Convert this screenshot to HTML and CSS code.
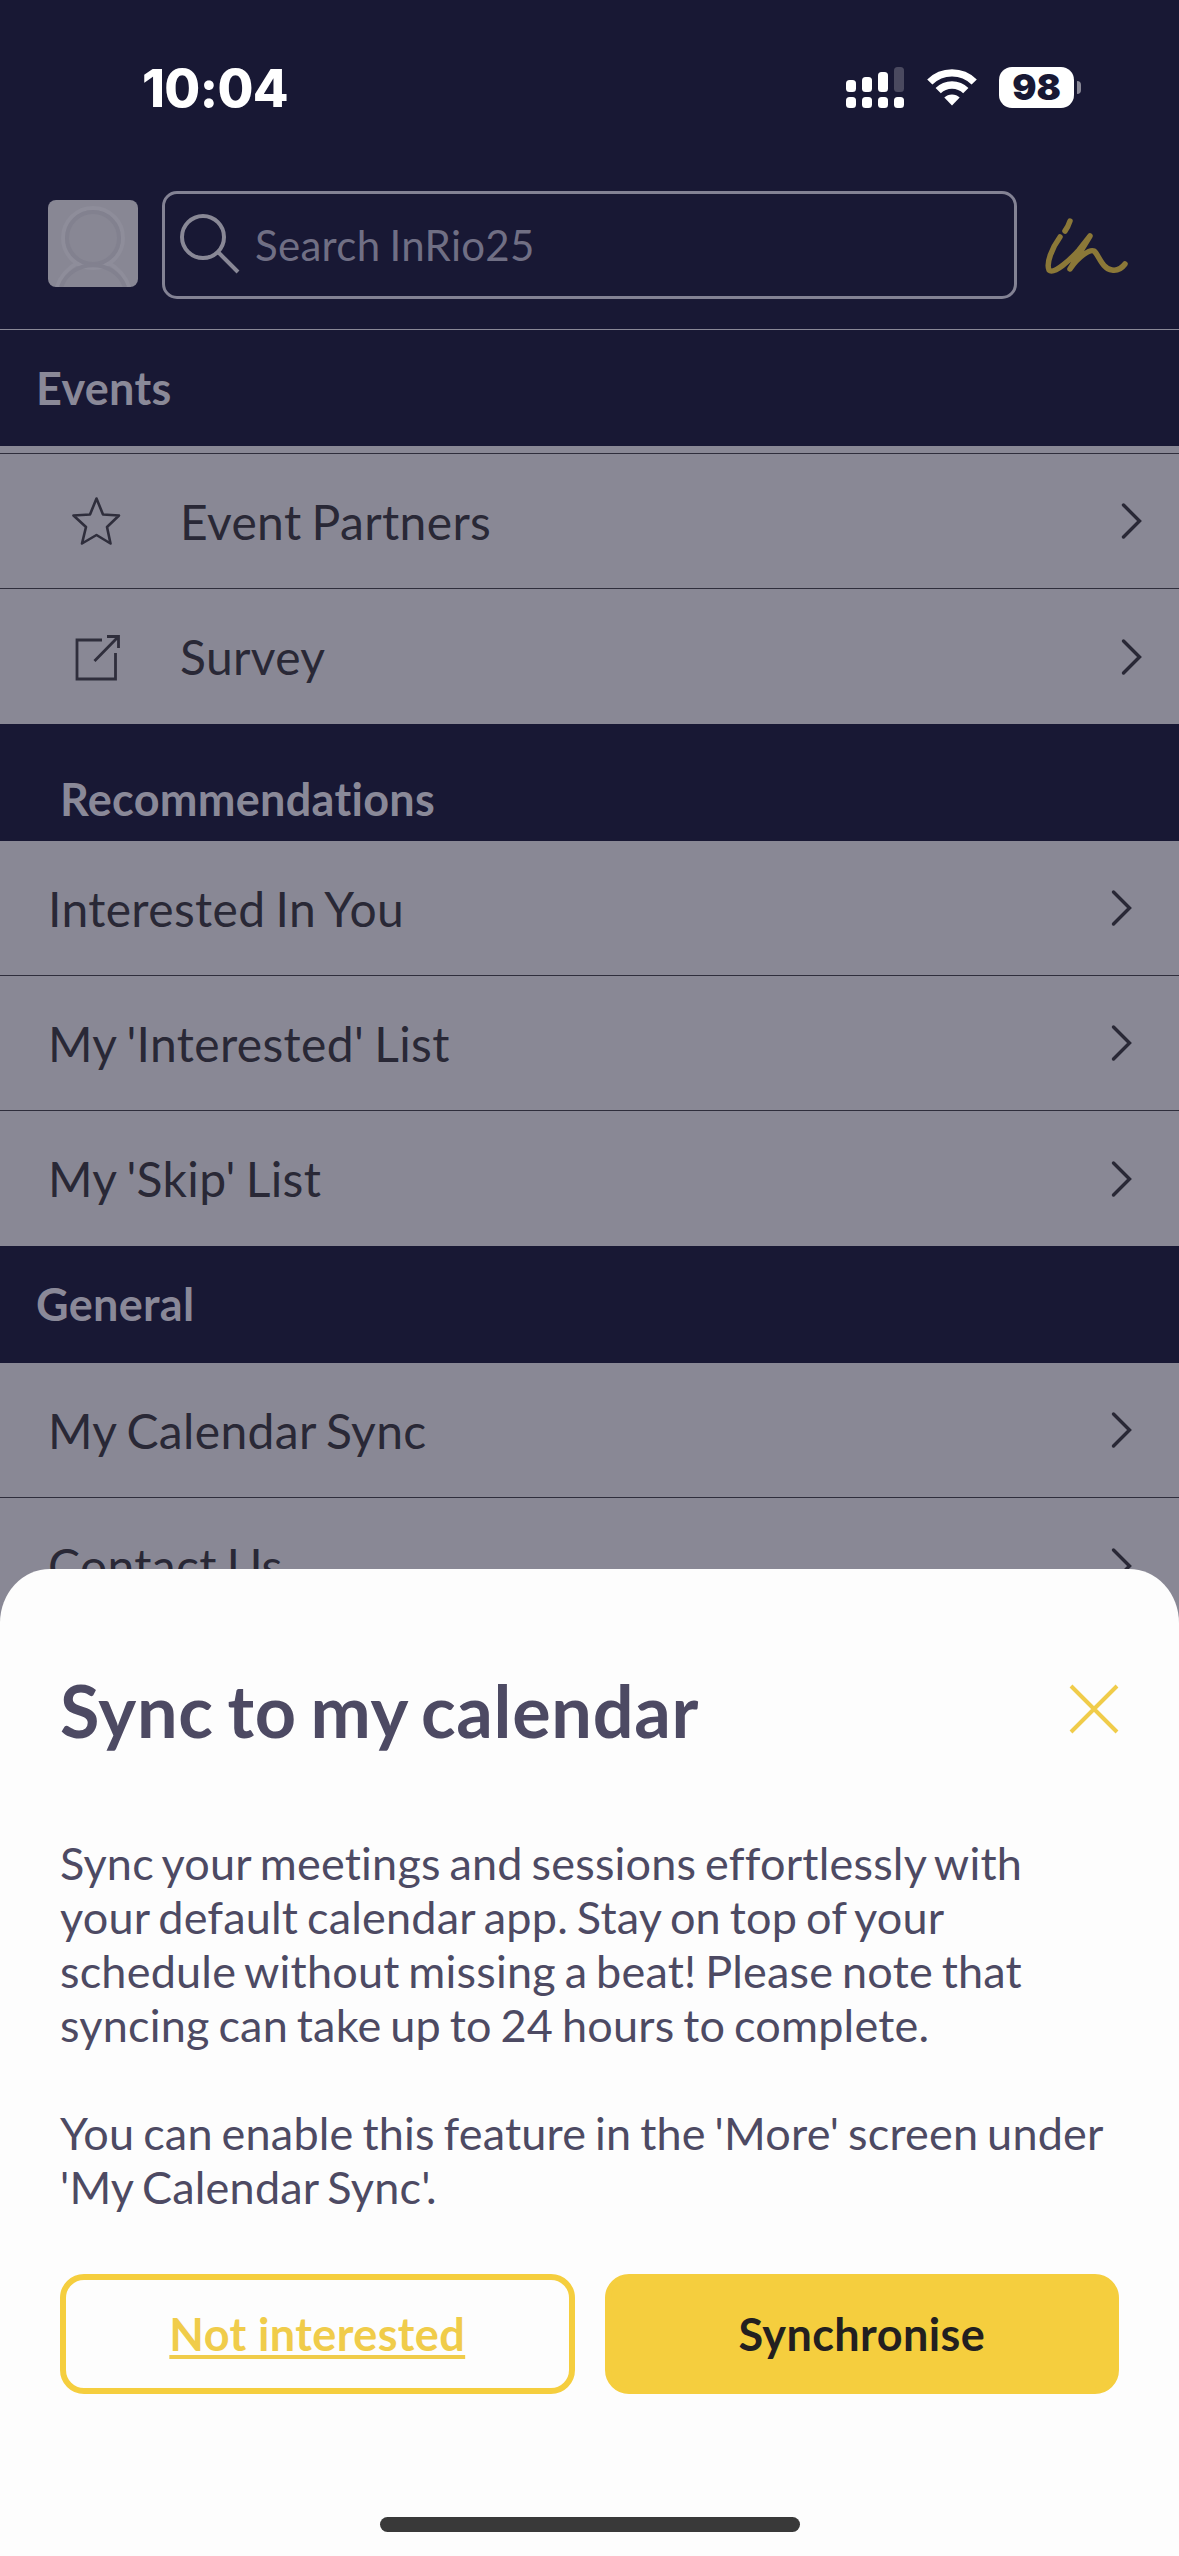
FILE: index.html
```html
<!DOCTYPE html>
<html lang="en">

<head>
  <meta charset="UTF-8" />
  <meta name="viewport" content="width=device-width, initial-scale=1.0" />
  <title>InRio25</title>

  <link rel="stylesheet" href="styles.css">
</head>

<body>
  <div id="app">
    <div class="status-bar">
      <span class="clock">10:04</span>
      <div class="status-icons">
        <svg class="signal" width="58" height="42" viewBox="0 0 58 42" fill="#fff">
          <rect x="0" y="13" width="10" height="12" rx="3.5" />
          <rect x="16" y="10" width="10" height="15" rx="3.5" />
          <rect x="32" y="5" width="10" height="20" rx="3.5" />
          <rect x="48" y="0" width="10" height="25" rx="3.5" fill="#4a495f" />
          <rect x="0" y="30" width="10" height="11" rx="3.5" />
          <rect x="16" y="30" width="10" height="11" rx="3.5" />
          <rect x="32" y="30" width="10" height="11" rx="3.5" />
          <rect x="48" y="30" width="10" height="11" rx="3.5" />
        </svg>
        <svg class="wifi" width="50" height="38" viewBox="0 0 50 38">
          <g fill="none" stroke="#fff" stroke-width="7.4">
            <path d="M2.8 14A31.5 31.5 0 0 1 47.2 14" />
            <path d="M11.2 22.7A19.5 19.5 0 0 1 38.8 22.7" />
          </g>
          <path fill="#fff" d="M17.3 29.6a11 11 0 0 1 15.4 0L25 37.5z" />
        </svg>
        <span class="battery">98</span>
        <span class="battery-cap"></span>
      </div>
    </div>

    <div class="top-bar">
      <svg class="avatar" width="90" height="87" viewBox="0 0 90 87">
        <rect width="90" height="87" rx="8" fill="#888794" />
        <g fill="none" stroke="#82818f" stroke-width="4">
          <circle cx="45" cy="38" r="30" stroke="#8e8d9a" />
          <circle cx="45" cy="38" r="26" />
          <path d="M9 87C12 77 19 69 29 63M81 87C78 77 71 69 61 63" stroke="#8e8d9a" />
          <path d="M13 87C24 58 66 58 77 87" />
        </g>
      </svg>
      <div class="search">
        <svg width="62" height="62" viewBox="0 0 62 62" fill="none" stroke="#898896" stroke-width="4">
          <circle cx="23" cy="24" r="21" />
          <path d="M38 39L58 59" />
        </svg>
        <span>Search InRio25</span>
      </div>
      <svg class="logo" width="84" height="58" viewBox="0 0 84 58" fill="none" stroke="#8b7838" stroke-width="5.5" stroke-linecap="round" stroke-linejoin="round">
        <path d="M25 4Q23 10 20 14" />
        <path d="M15 20C7 31 1 46 4 53C9 58 26 42 34 33L45 19L25 52C34 39 45 32 49 34C54 38 57 52 67 53C73 54 77 51 80 47" />
      </svg>
    </div>

    <h2>Events</h2>
    <ul class="events">
      <li>
        <svg class="icon" width="52" height="52" viewBox="0 0 52 52" fill="none" stroke="#2f2e3c" stroke-width="2.6" stroke-linejoin="round">
          <path d="M26.500 3.500L33 19.500L49 20.500L37 32L40.500 48.500L26.500 40L12 48.500L16 32L3.500 20.500L20 19.500Z" />
        </svg>
        <span>Event Partners</span>
        <svg class="arrow" width="22" height="38" viewBox="0 0 22 38"><path d="M2.500 3L18.500 19L2.500 35" /></svg>
      </li>
      <li>
        <svg class="icon" width="52" height="52" viewBox="0 0 52 52" fill="none" stroke="#2f2e3c" stroke-width="2.8">
          <path d="M32 9H7V48H45.500V22M24.500 30L48 6M37 5.500H48.500V17" />
        </svg>
        <span>Survey</span>
        <svg class="arrow" width="22" height="38" viewBox="0 0 22 38"><path d="M2.500 3L18.500 19L2.500 35" /></svg>
      </li>
    </ul>

    <h2 class="recommendations">Recommendations</h2>
    <ul>
      <li>
        <span>Interested In You</span>
        <svg class="arrow" width="22" height="38" viewBox="0 0 22 38"><path d="M2.500 3L18.500 19L2.500 35" /></svg>
      </li>
      <li>
        <span>My 'Interested' List</span>
        <svg class="arrow" width="22" height="38" viewBox="0 0 22 38"><path d="M2.500 3L18.500 19L2.500 35" /></svg>
      </li>
      <li>
        <span>My 'Skip' List</span>
        <svg class="arrow" width="22" height="38" viewBox="0 0 22 38"><path d="M2.500 3L18.500 19L2.500 35" /></svg>
      </li>
    </ul>

    <h2 class="general">General</h2>
    <ul>
      <li>
        <span>My Calendar Sync</span>
        <svg class="arrow" width="22" height="38" viewBox="0 0 22 38"><path d="M2.500 3L18.500 19L2.500 35" /></svg>
      </li>
      <li>
        <span>Contact Us</span>
        <svg class="arrow" width="22" height="38" viewBox="0 0 22 38"><path d="M2.500 3L18.500 19L2.500 35" /></svg>
      </li>
    </ul>

    <!-- bottom sheet -->
    <div class="sheet">
      <div class="sheet-title">
        <h1>Sync to my calendar</h1>
        <svg class="close" width="50" height="52" viewBox="0 0 50 52" fill="none" stroke="#f0cc4a" stroke-width="4">
          <path d="M2 3L48 49M48 3L2 49" />
        </svg>
      </div>
      <p>Sync your meetings and sessions effortlessly with<br>your default calendar app. Stay on top of your<br>schedule without missing a beat! Please note that<br>syncing can take up to 24 hours to complete.</p>
      <p>You can enable this feature in the 'More' screen under<br>'My Calendar Sync'.</p>
      <div class="buttons">
        <button class="outline">Not interested</button>
        <button>Synchronise</button>
      </div>
      <div class="home-bar"></div>
    </div>
  </div>
</body>

</html>
```

FILE: styles.css
```css
* {
  box-sizing: border-box;
}

body {
  margin: 0;
  background: #898895;
  font-family: Lato, sans-serif;
  font-variant-ligatures: none;
}

#app {
  position: relative;
  width: 1179px;
  height: 2556px;
  overflow: hidden;
}

.status-bar {
  display: flex;
  justify-content: space-between;
  height: 191px;
  padding: 66px 98px 0 142px;
  background: #181834;
}

.clock {
  color: #fff;
  font-family: Inter, sans-serif;
  font-size: 52px;
  font-weight: 800;
  letter-spacing: -0.6px;
  line-height: 45px;
}

.status-icons {
  display: flex;
  align-items: flex-start;
}

.signal {
  margin: 1px 23px 0 0;
}

.wifi {
  margin: 2px 22px 0 0;
}

.battery {
  width: 75px;
  height: 41px;
  margin-top: 1px;
  border-radius: 13px;
  background: #fff;
  color: #181834;
  font-family: Inter, sans-serif;
  font-size: 36px;
  font-weight: 900;
  line-height: 41px;
  text-align: center;
}

.battery-cap {
  width: 4px;
  height: 13px;
  margin: 15px 0 0 3px;
  border-radius: 0 5px 5px 0;
  background: #898896;
}

.top-bar {
  display: flex;
  align-items: flex-start;
  height: 139px;
  padding-left: 48px;
  border-bottom: 1px solid #898896;
  background: #181834;
}

.avatar {
  margin: 9px 24px 0 0;
}

.search {
  display: flex;
  align-items: center;
  gap: 13px;
  width: 855px;
  height: 108px;
  padding: 0 0 0 15px;
  border: 3px solid #838294;
  border-radius: 15px;
  color: #706f84;
  font-size: 42px;
  letter-spacing: 0.3px;
  word-spacing: -2px;
}

.search svg {
  margin-bottom: 2px;
}

.logo {
  margin: 26px 0 0 28px;
}

h2 {
  height: 116px;
  margin: 0;
  padding-left: 36px;
  background: #181834;
  color: #8a8998;
  font-size: 45px;
  font-weight: 700;
  letter-spacing: 0.3px;
  line-height: 116px;
}

.recommendations {
  height: 117px;
  padding: 17px 0 0 60px;
}

.general {
  height: 117px;
}

ul {
  margin: 0;
  padding: 0;
  list-style: none;
}

li {
  display: flex;
  align-items: center;
  height: 135px;
  padding: 0 46px 0 48px;
  border-bottom: 1px solid #2f2e3c;
  color: #292836;
  font-size: 48px;
  letter-spacing: 0.35px;
  word-spacing: -2.5px;
}

li:last-child {
  border-bottom: 0;
}

.events {
  border-top: 7px solid #898895;
}

.events li {
  padding: 0 36px 0 70px;
}

.events li:first-child {
  height: 136px;
  border-top: 1px solid #2f2e3c;
}

.icon {
  margin-right: 58px;
}

.arrow {
  margin-left: auto;
  fill: none;
  stroke: #292836;
  stroke-width: 3.4;
  stroke-linecap: round;
}

.sheet {
  position: absolute;
  left: 0;
  right: 0;
  bottom: 0;
  height: 987px;
  padding: 98px 60px 0;
  border-radius: 50px 50px 0 0 / 54px 54px 0 0;
  background: #fdfdfd;
  color: #4d4a63;
}

.sheet-title {
  display: flex;
  justify-content: space-between;
  align-items: center;
  height: 86px;
  margin-bottom: 83px;
}

h1 {
  margin: 0;
  font-size: 72px;
  font-weight: 700;
  letter-spacing: 0.7px;
  word-spacing: -4.5px;
}

.close {
  margin-bottom: 2px;
}

p {
  margin: 0 0 54px;
  font-size: 45px;
  letter-spacing: 0.2px;
  line-height: 54px;
  white-space: nowrap;
  word-spacing: -2.9px;
}

.buttons {
  display: flex;
  gap: 30px;
  margin-top: 60px;
}

button {
  flex: 1;
  height: 120px;
  padding: 0;
  border: 6px solid #f5ce3e;
  border-radius: 24px;
  background: #f5ce3e;
  color: #231f20;
  font-family: Lato, sans-serif;
  font-size: 45px;
  font-weight: 700;
  font-variant-ligatures: none;
  letter-spacing: 0.4px;
}

.outline {
  background: none;
  color: #f0cc4a;
  text-decoration: underline;
  text-decoration-thickness: 4px;
  text-underline-offset: 4px;
}

.home-bar {
  width: 420px;
  height: 15px;
  margin: 123px auto 0;
  border-radius: 8px;
  background: #393939;
}
```
